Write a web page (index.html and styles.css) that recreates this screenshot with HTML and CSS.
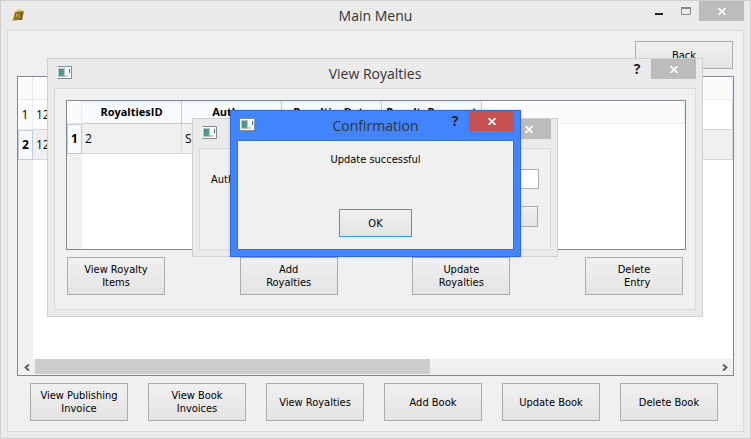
FILE: index.html
```html
<!DOCTYPE html>
<html lang="en">
<head>
<meta charset="utf-8">
<title>Main Menu</title>
<link rel="stylesheet" href="styles.css">
</head>
<body>
<svg class="defs" aria-hidden="true">
  <defs>
    <linearGradient id="screen" x1="0" y1="0" x2="1" y2="1">
      <stop offset="0" stop-color="#4a7fa8"/>
      <stop offset="1" stop-color="#55b071"/>
    </linearGradient>
    <symbol id="app" viewBox="0 0 15 13">
      <rect x="0" y="0" width="15" height="13" rx="1" fill="#858a92"/>
      <rect x="0" y="1" width="14" height="11" fill="#fafafa"/>
      <rect x="1" y="2" width="7" height="9" fill="#b4c4cc"/>
      <rect x="2" y="3" width="5" height="7" fill="url(#screen)"/>
      <rect x="8" y="9" width="3" height="2" fill="#cccccc"/>
      <rect x="12" y="3" width="1" height="4" fill="#3c6f8c"/>
    </symbol>
    <symbol id="close" viewBox="0 0 8 7">
      <path d="M0.5 0 L7.5 7 M7.5 0 L0.5 7" stroke="#fff" stroke-width="1.7"/>
    </symbol>
  </defs>
</svg>
<main class="desktop">
  <section class="window main-window">
    <header class="titlebar">
      <svg class="book-icon" viewBox="0 0 13 14" aria-hidden="true">
        <path d="M5 2 L9 1 L10 4 L4 5Z" fill="#d5cf55"/>
        <path d="M3 4 L12 3 L10 12 L1 12Z" fill="#96701a"/>
        <path d="M1 11 L0 13 L5 12.5Z" fill="#b99a55"/>
        <path d="M4 9 L5 6 L7 8 L8 10" fill="none" stroke="#c9b070"/>
        <path d="M10 4 L9 12" stroke="#6f5010"/>
      </svg>
      <h1 class="title">Main Menu</h1>
      <div class="controls">
        <button class="ctl minimise" aria-label="Minimize"><svg width="8" height="2"><rect width="8" height="2" fill="#222"/></svg></button>
        <button class="ctl maximise" aria-label="Maximize"><svg width="10" height="8"><path d="M.5 0V7.5H9.500V0M0 1H10" fill="none" stroke="#888"/><rect width="10" height="2" fill="#888"/></svg></button>
        <button class="close" aria-label="Close"><svg width="8" height="7"><use href="#close"/></svg></button>
      </div>
    </header>
    <div class="client main-client">
      <button class="btn back">Back</button>
      <div class="grid-view main-grid">
        <table>
          <tr class="head"><th class="num"></th><th></th></tr>
          <tr><th class="num">1</th><td>12</td></tr>
          <tr class="selected"><th class="num">2</th><td>12</td></tr>
        </table>
        <div class="scrollbar">
          <button class="arrow" aria-label="Scroll left"><svg width="6" height="7" viewBox="0 0 6 7"><path d="M5 0.500 L1.500 3.500 L5 6.500" fill="none" stroke="#606060" stroke-width="2"/></svg></button>
          <div class="track"><div class="thumb"></div></div>
          <button class="arrow" aria-label="Scroll right"><svg width="6" height="7" viewBox="0 0 6 7"><path d="M1 0.500 L4.500 3.500 L1 6.500" fill="none" stroke="#606060" stroke-width="2"/></svg></button>
        </div>
      </div>
      <div class="actions">
        <button class="btn tall">View Publishing<br>Invoice</button>
        <button class="btn tall">View Book<br>Invoices</button>
        <button class="btn tall">View Royalties</button>
        <button class="btn tall">Add Book</button>
        <button class="btn tall">Update Book</button>
        <button class="btn tall">Delete Book</button>
      </div>
    </div>
  </section>

  <section class="window royalties" role="dialog" aria-label="View Royalties">
    <header class="titlebar">
      <svg class="app-icon" aria-hidden="true"><use href="#app"/></svg>
      <h2 class="title">View Royalties</h2>
      <div class="controls">
        <button class="help" aria-label="Help">?</button>
        <button class="close" aria-label="Close"><svg width="8" height="7"><use href="#close"/></svg></button>
      </div>
    </header>
    <div class="client royalties-client">
      <div class="grid-view">
        <table>
          <tr class="head"><th class="num"></th><th class="col">RoyaltiesID</th><th class="col">Author</th><th class="col">RoyaltiesDate</th><th class="col">RoyaltyPayment</th><th></th></tr>
          <tr class="selected"><th class="num">1</th><td>2</td><td>S</td><td></td><td></td><td class="blank"></td></tr>
        </table>
      </div>
      <div class="actions spread">
        <button class="btn tall">View Royalty<br>Items</button>
        <button class="btn tall">Add<br>Royalties</button>
        <button class="btn tall">Update<br>Royalties</button>
        <button class="btn tall">Delete<br>&nbsp; Entry</button>
      </div>
    </div>
  </section>

  <section class="window author" role="dialog" aria-label="Author">
    <header class="titlebar">
      <svg class="app-icon" aria-hidden="true"><use href="#app"/></svg>
      <div class="controls">
        <button class="close" aria-label="Close"><svg width="8" height="7"><use href="#close"/></svg></button>
      </div>
    </header>
    <div class="client author-client">
      <div class="field"><label for="author">Author</label><input id="author" type="text"></div>
      <button class="btn small" aria-label="Save"></button>
    </div>
  </section>

  <section class="window active confirm" role="dialog" aria-label="Confirmation">
    <header class="titlebar">
      <svg class="app-icon" aria-hidden="true"><use href="#app"/></svg>
      <h2 class="title">Confirmation</h2>
      <div class="controls">
        <button class="help" aria-label="Help">?</button>
        <button class="close" aria-label="Close"><svg width="8" height="7"><use href="#close"/></svg></button>
      </div>
    </header>
    <div class="client confirm-client">
      <p class="message">Update successful</p>
      <button class="btn ok">OK</button>
    </div>
  </section>
</main>
</body>
</html>
```
FILE: styles.css
```css
* { box-sizing: border-box; }
body {
  margin: 0;
  font: 11px/13px "DejaVu Sans Condensed", "Noto Sans", sans-serif;
  color: #000;
}
button, input { font: inherit; color: inherit; margin: 0; padding: 0; border-radius: 0; }
svg { display: block; }
.defs { position: absolute; width: 0; height: 0; }
.desktop { position: relative; min-height: 100vh; display: flex; overflow: hidden; }

/* Window frame */
.window {
  display: flex;
  flex-direction: column;
  padding: 0 6px 6px;
  border: 1px solid #d0d0d0;
  background: #ebebeb;
}
.main-window { flex: 1; }
.royalties, .author, .confirm { position: absolute; }
.royalties { left: 47px; right: 48px; top: 58px; height: 259px; }
.author { left: 192px; top: 118px; width: 366px; height: 139px; }
.confirm { left: 230px; top: 110px; width: 291px; height: 147px; }

.titlebar { display: grid; grid-template-columns: 1fr auto 1fr; height: 29px; flex: none; }
.title {
  grid-column: 2;
  margin: 0;
  font: 14px/29px "Open Sans", sans-serif;
  color: #333;
}
.app-icon { width: 15px; height: 13px; margin: 7px 0 0 3px; }
.book-icon { width: 13px; height: 14px; margin: 7px 0 0 5px; }
.controls { grid-column: 3; display: flex; justify-content: flex-end; align-items: flex-start; }
.controls button { display: grid; place-items: center; height: 20px; border: 0; background: none; }
.controls .ctl { width: 27px; }
.controls .minimise { padding-top: 6px; }
.controls .close { width: 45px; background: #bcbcbc; }
.controls .help { width: 28px; font: bold 14px/20px "Open Sans", sans-serif; color: #222; }

.client {
  flex: 1;
  display: flex;
  flex-direction: column;
  border: 1px solid #dadada;
  background: #f0f0f0;
}
.active { background: #4284fb; border-color: #3468c8; box-shadow: 0 0 3px rgba(0, 0, 0, .2); }
.active .client { border-color: #3a6fd0; }
.active .close { background: #c75050; }

/* Buttons */
.btn {
  width: 98px;
  height: 28px;
  flex: none;
  border: 1px solid #acacac;
  background: linear-gradient(#f0f0f0, #e4e4e4);
}
.tall { height: 38px; }

/* Grid views */
.grid-view {
  flex: 1;
  display: flex;
  flex-direction: column;
  border: 1px solid #828790;
  background: linear-gradient(90deg, #f0f0f0 15px, #fff 15px);
}
table { width: 100%; table-layout: fixed; border-spacing: 0; font: 12px/16px "Open Sans", sans-serif; }
th, td { height: 30px; padding: 0 3px; border: 0 solid #d8d8d8; border-width: 0 1px 1px 0; text-align: left; white-space: nowrap; }
th { font-weight: normal; background: #fcfcfc; border-color: #e4ecf7; }
.head th { height: 23px; text-align: center; }
.num { width: 15px; padding: 0; text-align: center; background: #fcfcfc; }
td { background: #fff; }
.selected td { background: #f0f0f0; }
.selected .num, .head .col {
  font-weight: bold;
  background: #f8fbff;
  border-color: #c0cbdc;
}
.selected .num { border-width: 1px; }
.head .col {
  width: 100px;
  padding: 0;
  font-size: 11px;
  background: linear-gradient(#e4edf8, #f9fcff 4px);
}
.selected td.blank { background: #fff; border: 0; }

.scrollbar { display: flex; height: 16px; margin-top: auto; background: #f0f0f0; }
.arrow { width: 17px; border: 0; background: none; display: grid; place-items: center; }
.track { flex: 1; padding-bottom: 1px; }
.thumb { width: 58%; height: 100%; background: #cdcdcd; }

/* Main menu */
.main-client { padding: 10px 9px; }
.back { align-self: flex-end; margin: 0 1px 7px 0; }
.actions { display: flex; gap: 20px; margin: 7px 13px 0; }

/* Royalties */
.royalties-client { padding: 11px 9px 14px 11px; }
.spread { justify-content: space-between; gap: 0; margin: 7px 3px 0 1px; }

/* Author */
.author-client { padding: 20px 11px 0; align-items: flex-end; gap: 17px; }
.field { display: flex; align-self: stretch; align-items: center; }
.field label { width: 60px; }
.field input { flex: 1; height: 20px; border: 1px solid #abadb3; background: #fff; }
.small { width: 140px; height: 21px; margin-right: 1px; }

/* Confirmation */
.confirm-client { align-items: center; justify-content: space-between; padding: 12px 0; }
.message { margin: 0; }
.ok { width: 73px; border-color: #3399ff; }
```
